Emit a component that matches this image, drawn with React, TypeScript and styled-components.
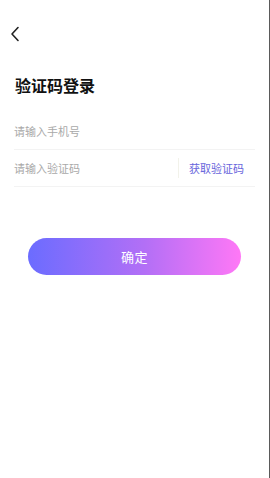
import styled, { createGlobalStyle } from "styled-components";

const GlobalStyle = createGlobalStyle`
  html, body {
    margin: 0;
    padding: 0;
    background: #ffffff;
  }
  body {
    font-family: "Noto Sans CJK SC", "Noto Sans", sans-serif;
  }
`;

const Page = styled.div`
  width: 270px;
  height: 478px;
  box-sizing: border-box;
  border-right: 1px solid #5a5a5a;
  background: #fff;
  display: flex;
  flex-direction: column;
`;

const BackButton = styled.div`
  display: flex;
  align-items: center;
  height: 16px;
  margin: 26px 0 0 10px;
  color: #222;
`;

const Title = styled.h1`
  margin: 31px 0 0 15px;
  font-size: 16px;
  line-height: 24px;
  font-weight: 700;
  color: #111;
`;

const Form = styled.div`
  margin: 16px 14px 0 14px;
  display: flex;
  flex-direction: column;
`;

const Row = styled.div`
  height: 36px;
  display: flex;
  align-items: center;
  border-bottom: 1px solid #f3f3f3;
`;

const Field = styled.div`
  flex: 1;
  font-size: 11px;
  color: #a9a9a9;
`;

const CodeButton = styled.div`
  height: 20px;
  padding-left: 10px;
  margin-right: 11px;
  border-left: 1px solid #f2f2ea;
  display: flex;
  align-items: center;
  font-size: 11px;
  color: #6765dc;
`;

const Submit = styled.button`
  margin: 51px 28px 0 28px;
  height: 37px;
  border: none;
  border-radius: 19px;
  background: linear-gradient(90deg, #6b6cff 0%, #b36ff6 55%, #ff78f6 100%);
  color: #fff;
  font-family: inherit;
  font-size: 13px;
  letter-spacing: 0.5px;
`;

export default function App() {
  return (
    <>
      <GlobalStyle />
      <Page>
        <BackButton>
          <svg width="10" height="16" viewBox="0 0 10 16" fill="none">
            <path d="M8 1.5L2 8l6 6.5" stroke="currentColor" strokeWidth="1.6" strokeLinecap="round" strokeLinejoin="round" />
          </svg>
        </BackButton>
        <Title>验证码登录</Title>
        <Form>
          <Row>
            <Field>请输入手机号</Field>
          </Row>
          <Row>
            <Field>请输入验证码</Field>
            <CodeButton>获取验证码</CodeButton>
          </Row>
        </Form>
        <Submit>确定</Submit>
      </Page>
    </>
  );
}
